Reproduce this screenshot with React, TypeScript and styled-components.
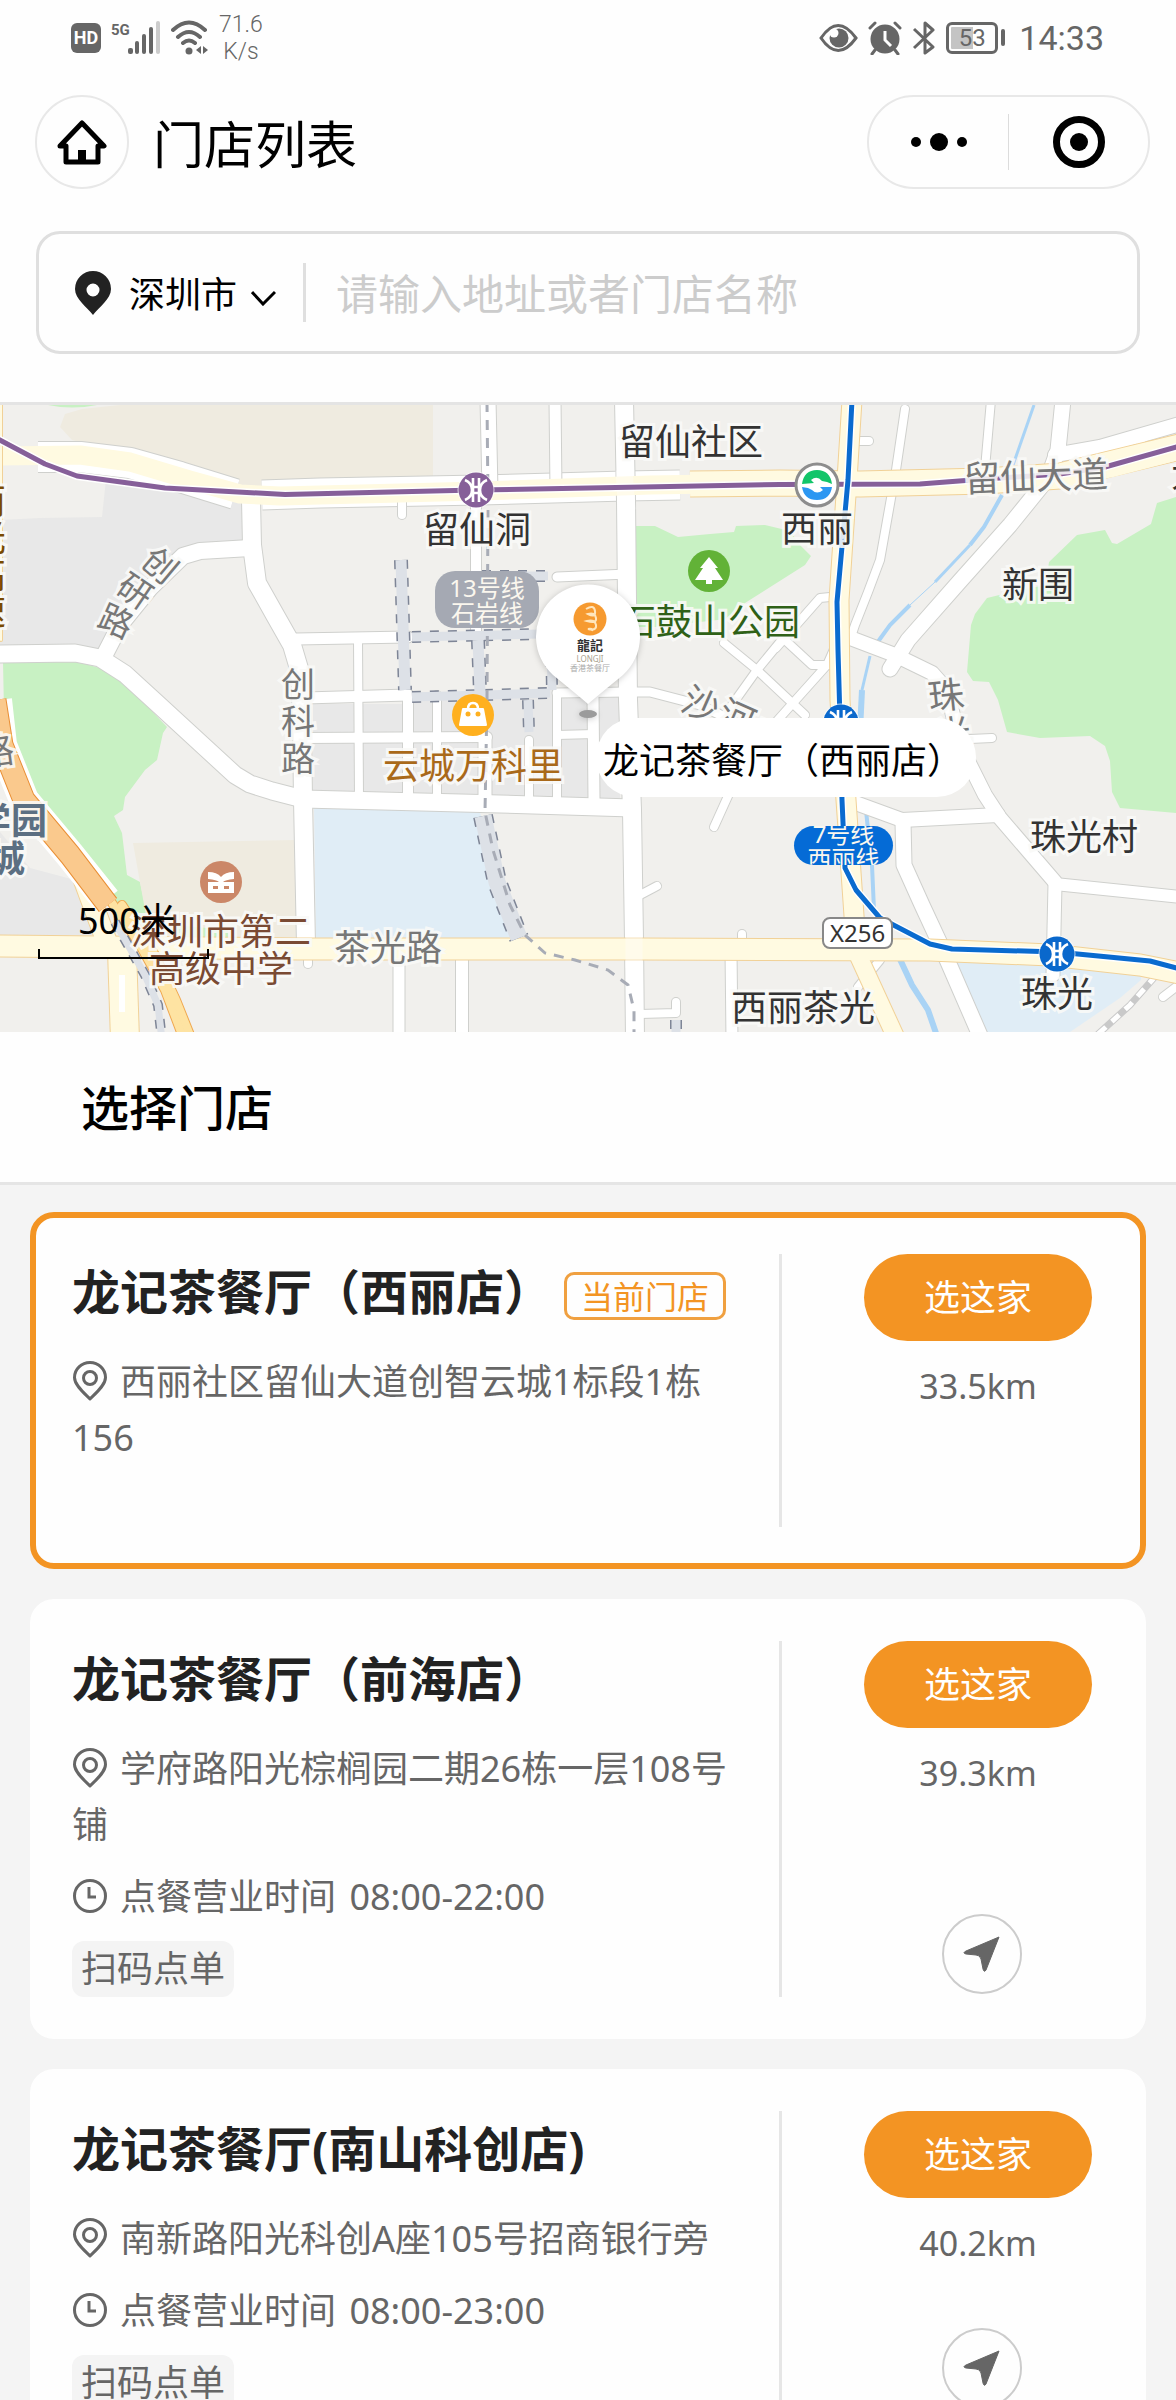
import React from "react";
import styled, { createGlobalStyle } from "styled-components";

const GlobalStyle = createGlobalStyle`
  *, *::before, *::after { box-sizing: border-box; }
  body {
    margin: 0;
    background: #f4f4f4;
    color: #000;
    font-family: "Noto Sans", "Noto Sans CJK SC", sans-serif;
  }
  h1, h2, h3, p, ul { margin: 0; padding: 0; }
  button, input, select { font: inherit; color: inherit; }
`;

const Page = styled.div`
  display: flex;
  flex-direction: column;
  height: 100vh;
  overflow: hidden;
`;

const Header = styled.header`
  flex: none;
  background: #fefefe;
  border-bottom: 3px solid #e4e4e4;
  padding-bottom: 48px;
`;

/* ---------- status bar ---------- */

const StatusBar = styled.div`
  display: flex;
  align-items: center;
  justify-content: space-between;
  height: 75px;
  padding: 0 72px 0 71px;
  color: #666;
`;

const StatusGroup = styled.div`
  display: flex;
  align-items: center;
  gap: 10px;
`;

const HdBadge = styled.span`
  width: 30px;
  height: 30px;
  border-radius: 6px;
  background: #666;
  color: #fff;
  font: 700 18px/30px Roboto, sans-serif;
  text-align: center;
`;

const NetSpeed = styled.span`
  font: 300 23px/27px Roboto, sans-serif;
  text-align: center;
`;

const Battery = styled.span`
  display: flex;
  align-items: center;
  gap: 3px;
  &::after {
    content: "";
    width: 4px;
    height: 17px;
    border-radius: 2px;
    background: #666;
  }
`;

const BatteryCell = styled.span`
  width: 52px;
  height: 32px;
  border: 3px solid #666;
  border-radius: 6px;
  background: linear-gradient(90deg, #c4c4c4 53%, #fefefe 53%) content-box;
  padding: 2px;
  font: 400 24px/23px Roboto, sans-serif;
  text-align: center;
`;

const Clock = styled.time`
  font: 400 34px/40px Roboto, sans-serif;
  margin-left: 4px;
`;

/* ---------- navigation ---------- */

const NavBar = styled.nav`
  display: flex;
  align-items: center;
  padding: 20px 26px 42px 35px;
`;

const HomeButton = styled.button`
  display: grid;
  place-items: center;
  width: 94px;
  height: 94px;
  padding: 0;
  border: 2px solid #e8e8e8;
  border-radius: 50%;
  background: none;
`;

const PageTitle = styled.h1`
  flex: 1;
  padding: 4px 0 0 24px;
  font-size: 51px;
  font-weight: 400;
  line-height: 72px;
`;

const Capsule = styled.div`
  display: flex;
  align-items: center;
  width: 283px;
  height: 94px;
  border: 2px solid #e8e8e8;
  border-radius: 47px;
`;

const CapsuleButton = styled.button`
  display: grid;
  place-items: center;
  flex: 1;
  height: 56px;
  padding: 0;
  border: 0;
  background: none;
  & + & { border-left: 1px solid #dcdcdc; }
`;

/* ---------- search ---------- */

const SearchBox = styled.form`
  display: flex;
  align-items: center;
  height: 123px;
  margin: 0 36px;
  padding: 0 36px;
  border: 3px solid #dfdfdf;
  border-radius: 24px;
`;

const CityField = styled.label`
  display: flex;
  align-items: center;
  gap: 18px;
  position: relative;
`;

const CitySelect = styled.select`
  appearance: none;
  width: 147px;
  padding: 4px 39px 0 0;
  border: 0;
  background: none;
  font-size: 36px;
  line-height: 54px;
`;

const CityArrow = styled.svg`
  position: absolute;
  right: 0;
  bottom: 16px;
  pointer-events: none;
`;

const SearchInput = styled.input`
  flex: 1;
  min-width: 0;
  height: 59px;
  margin-left: 27px;
  padding: 2px 0 0 30px;
  border: 0;
  border-left: 3px solid #dfdfdf;
  outline: 0;
  background: none;
  font-size: 42px;
  line-height: 57px;
  &::placeholder { color: #ccc; opacity: 1; }
`;

/* ---------- map ---------- */

const MapPanel = styled.section`
  display: flex;
  justify-content: center;
  flex: none;
  overflow: hidden;
  background: #f1f0ed;
`;

const MapCanvas = styled.div`
  position: relative;
  flex: none;
  width: 1176px;
  height: 627px;
  overflow: hidden;
`;

const MapArt = styled.svg`
  display: block;
`;

const MapLabel = styled.span<{ $x: number; $y: number; $color?: string; $rotate?: number; $size?: number; $bold?: boolean }>`
  position: absolute;
  left: ${(p) => p.$x}px;
  top: ${(p) => p.$y}px;
  transform: translate(-50%, -50%) rotate(${(p) => p.$rotate ?? 0}deg);
  color: ${(p) => p.$color ?? "#333"};
  font-size: ${(p) => p.$size ?? 36}px;
  font-weight: ${(p) => (p.$bold ? 700 : 400)};
  line-height: 37px;
  text-align: center;
  white-space: pre;
  -webkit-text-stroke: 6px rgba(250, 250, 248, 0.9);
  paint-order: stroke fill;
`;

const LineBadge = styled.span<{ $x: number; $y: number; $w: number; $h: number; $bg: string }>`
  position: absolute;
  left: ${(p) => p.$x}px;
  top: ${(p) => p.$y}px;
  display: flex;
  align-items: center;
  justify-content: center;
  width: ${(p) => p.$w}px;
  height: ${(p) => p.$h}px;
  border-radius: 20px;
  background: ${(p) => p.$bg};
  color: #fbf7ee;
  font-size: 24px;
  line-height: 25px;
  text-align: center;
  white-space: pre;
  overflow: hidden;
`;

const RoadSign = styled.span`
  position: absolute;
  left: 822px;
  top: 512px;
  width: 71px;
  height: 32px;
  border: 2px solid #888;
  border-radius: 8px;
  background: #fff;
  color: #333;
  font-size: 24px;
  line-height: 28px;
  text-align: center;
`;

const Callout = styled.span`
  position: absolute;
  left: 596px;
  top: 313px;
  width: 380px;
  height: 79px;
  padding-left: 7px;
  border-radius: 40px;
  background: #fff;
  font-size: 36px;
  line-height: 85px;
  white-space: nowrap;
`;

const ScaleBar = styled.span`
  position: absolute;
  left: 38px;
  top: 497px;
  width: 171px;
  height: 57px;
  padding-left: 40px;
  font-size: 36px;
  line-height: 38px;
  &::after {
    content: "";
    position: absolute;
    left: 0;
    right: 0;
    bottom: 0;
    height: 10px;
    border: solid #000;
    border-width: 0 2px 2px;
  }
`;

const PinBrand = styled.span`
  position: absolute;
  left: 536px;
  top: 232px;
  display: flex;
  flex-direction: column;
  align-items: center;
  width: 108px;
  color: #333;
  font-size: 13px;
  font-weight: 700;
  line-height: 17px;
`;

const PinNote = styled.span<{ $color: string }>`
  color: ${(p) => p.$color};
  font-size: 8px;
  font-weight: 400;
  line-height: 9px;
`;

type Road = [string, number];

const sideRoads: Road[] = [
  ["M251 500L252 545L257 583L275 615L292 645L300 672L302 720L303 800L306 945", 18],
  ["M250 548L200 551L183 556L150 588L120 625L104 656", 16],
  ["M-5 654L75 653L100 658L125 674L160 706L235 775L250 784L272 791L303 799L500 804L632 808", 17],
  ["M296 639L408 637", 11],
  ["M305 698L408 695", 11],
  ["M358 640L359 797", 8],
  ["M303 738L487 737", 10],
  ["M408 695L408 800", 10],
  ["M437 695L437 800", 8],
  ["M485 740L485 800", 13],
  ["M529 740L529 800", 8],
  ["M557 693L557 800", 8],
  ["M557 693L628 692", 9],
  ["M593 695L594 800", 11],
  ["M557 735L594 734", 8],
  ["M624 400L626 500L628 700L632 810L634 940L635 1040", 18],
  ["M488 400L490 490", 15],
  ["M476 500L476 636", 10],
  ["M555 400L556 490", 11],
  ["M557 577L628 574", 9],
  ["M402 500L402 515", 8],
  ["M905 409L896 470L888 515L880 560L868 592L855 625L850 640", 8],
  ["M991 400L984 480", 8],
  ["M852 441L869 441", 8],
  ["M1063 400L1058 450L1048 478L1010 525L960 581L908 640L890 669", 15],
  ["M1055 455L1100 447L1180 424", 14],
  ["M1141 443L1147 460", 9],
  ["M845 636L895 655L932 673L947 690L960 745L985 795L1000 818L1055 882", 14],
  ["M1055 884L1180 897", 12],
  ["M1055 884L1053 975", 13],
  ["M970 739L992 738", 8],
  ["M850 801L902 820L998 815", 14],
  ["M903 822L904 865L922 905L942 948L982 1040", 15],
  ["M724 643L757 670L805 715", 8],
  ["M785 636L757 670L727 712", 8],
  ["M776 648L820 598L840 596", 8],
  ["M785 640L812 665L838 665", 8],
  ["M838 640L827 665L776 722L760 740", 8],
  ["M630 692L650 692L700 705L735 722", 9],
  ["M733 785L714 827", 8],
  ["M640 895L657 886", 8],
  ["M640 1014L676 1013L676 1002", 8],
  ["M399 950L399 1040", 11],
  ["M462 950L462 1040", 12],
  ["M731 950L732 1040", 11],
  ["M742 945L742 934", 8],
  ["M308 955L308 964", 8],
  ["M880 960L858 987", 8],
  ["M1180 984L1163 997", 8],
];

const frontage: Road[] = [
  ["M38 457L80 457L130 463L180 477L235 494", 30],
  ["M262 495L320 493L480 490L625 486L680 485", 29],
];

const mainRoads: Road[] = [
  ["M-5 456L80 455L130 462L190 480L240 494L280 496L480 491L650 485L780 483L860 484L985 481L1060 478L1110 468L1180 450", 19],
  ["M690 484L780 483L860 484L985 481L1060 476L1180 447", 25],
  ["M852 400L847 480L839 600L840 700L846 800L855 930L860 950", 19],
  ["M-5 946L300 949L640 949L930 950L1050 955L1140 965L1180 973", 21],
  ["M80 870L108 945", 20],
  ["M122 950L125 1040", 28],
  ["M858 955L897 1040", 17],
];

const railBands: Road[] = [
  ["M401 560L405 690", 11],
  ["M412 637L540 634", 9],
  ["M478 640L480 692", 11],
  ["M412 697L550 693", 9],
  ["M482 576L548 576", 9],
  ["M551 640L552 690", 9],
  ["M528 700L529 732", 9],
  ["M483 816L497 882L519 938", 17],
  ["M676 1020L676 1040", 9],
  ["M115 922L145 975L158 1005L162 1040", 7],
];

const metroPurple = "M-4 438L45 464L77 476L165 488L285 494.500L476 490L780 484.500L920 484L985 479L1060 474L1105 467L1180 446";
const metroBlue = "M852 400L848 480L837 602L838 650L840 720L842 800L845 868L856 890L880 918L930 944L952 949L1057 952L1150 961L1180 969";

function Roads({ roads, fill, edge, cap = "round" }: { roads: Road[]; fill: string; edge: string; cap?: "round" | "butt" }) {
  return (
    <g fill="none" strokeLinejoin="round" strokeLinecap={cap}>
      {roads.map(([d, w], i) => <path key={`e${i}`} d={d} stroke={edge} strokeWidth={w + 2} />)}
      {roads.map(([d, w], i) => <path key={`f${i}`} d={d} stroke={fill} strokeWidth={w} />)}
    </g>
  );
}

function MetroSign({ x, y, color }: { x: number; y: number; color: string }) {
  return (
    <g transform={`translate(${x} ${y})`}>
      <circle r="18.500" fill="#fff" opacity="0.7" />
      <circle r="17.500" fill={color} />
      <path d="M-11-10Q-4-7-4 0Q-4 7-11 10M11-10Q4-7 4 0Q4 7 11 10M-3-12V12M3-12V12M-4-3H4M-4 3H4" fill="none" stroke="#fff" strokeWidth="2.600" />
    </g>
  );
}

function MapDrawing() {
  return (
    <MapArt width="1176" height="627" viewBox="0 405 1176 627" aria-hidden="true">
      <rect y="405" width="1176" height="627" fill="#f1f0ed" />
      <path d="M120 405L82 409L65 414L60 427L72 440L130 455L235 490H433V405Z" fill="#efebe0" />
      <path d="M48 405H97Q72 410 48 405Z" fill="#c8f1c3" />
      <path d="M107 470L102 517L40 518L0 520V650L104 650L170 560L245 548V500L200 488Z" fill="#e8e8e8" />
      <path d="M3 662L75 661L103 669L126 684L167 727L163 733L157 760L145 770L125 797L123 810L114 816L122 833L127 875L140 882L147 915L170 945L130 930L60 830L5 760Z" fill="#c8f1c3" />
      <path d="M0 832L30 868L75 880L98 935H0Z" fill="#e8e8e8" />
      <path d="M133 843L296 840V938H150Z" fill="#efebe0" />
      <path d="M175 925L228 930V940H175Z" fill="#c8f1c3" />
      <path d="M314 806L480 812L497 882L517 940H316Z" fill="#e0edf6" />
      <path d="M313 704H410V690H620V800H313Z" fill="#e8e8e8" />
      <path d="M413 642H478V692H413ZM486 642H546V692H486Z" fill="#f1f0ed" />
      <path d="M636 526H655L678 537L710 534L734 532L736 526L765 525L790 531L800 545L811 556L805 565L745 603L735 618L700 622L655 627H636Z" fill="#c8f1c3" />
      <path d="M1176 497L1157 503L1151 524L1117 544L1112 543L1105 530L1077 535L1049 562L1046 585L1020 590L987 598L975 614L971 625L967 672L973 681L989 682L998 700L1007 732L1040 738L1090 736L1105 746L1110 761L1112 792L1120 808L1176 813Z" fill="#c8f1c3" />
      <path d="M955 962L1141 970V980L1120 998L1070 1032H985Z" fill="#e0edf6" />
      <g fill="none" stroke="#a9d3f5">
        <path d="M1034 405L1013 465" strokeWidth="3" />
        <path d="M1002 495L984 527L970 545" strokeWidth="4" />
        <path d="M970 545L935 582" strokeWidth="3" />
        <path d="M935 582L910 605" strokeWidth="1" />
        <path d="M910 605L890 625L877 643" strokeWidth="4" />
        <path d="M870 656L862 690" strokeWidth="3" />
        <path d="M862 690L860 730" strokeWidth="6" />
        <path d="M866 810L868 830M872 865L874 910" strokeWidth="4" />
        <path d="M898 955L912 985L928 1010L937 1036" strokeWidth="6" />
      </g>
      <Roads roads={frontage} fill="#fff" edge="#cfd0cd" cap="butt" />
      <Roads roads={sideRoads} fill="#fff" edge="#cfd0cd" />
      <path d="M1168 962L1130 1005L1096 1036" fill="none" stroke="#c9c9c9" strokeWidth="7" />
      <path d="M1168 962L1130 1005L1096 1036" fill="none" stroke="#fff" strokeWidth="5" strokeDasharray="10 8" />
      <Roads roads={mainRoads.slice(1)} fill="#fffae1" edge="#f1d197" cap="butt" />
      <path d={mainRoads[0][0]} fill="none" stroke="#fffae1" strokeWidth={mainRoads[0][1]} strokeLinejoin="round" />
      <path d="M846 800L855 930L860 950M852 400L847 480L839 600L840 700M122 945V970M80 870L105 940" fill="none" stroke="#fffae1" strokeWidth="17" />
      <path d="M122 975V1012" stroke="#fff" strokeWidth="6" />
      <path d="M624 470L627 510M634 930V968" stroke="#fff" strokeWidth="17" opacity="0.35" />
      <Roads roads={[["M1 395L1 640", 2]]} fill="#fffae1" edge="#f1d197" />
      <Roads
        roads={[
          ["M110 900L140 945L165 990L184 1040", 8],
          ["M122 905L155 955L176 1000L192 1040", 8],
        ]}
        fill="#fee3a2"
        edge="#f0a850"
      />
      <path d="M-3 700L2 745L24 800L70 855L106 900" fill="none" stroke="#fff" strokeWidth="30" />
      <Roads roads={[["M-5 700L2 745L24 800L70 855L108 905", 21]]} fill="#fac98d" edge="#e98f35" cap="butt" />
      <g fill="none">
        {railBands.map(([d, w], i) => <path key={`d${i}`} d={d} stroke="#7e8596" strokeWidth={w + 3} strokeDasharray="9 9" />)}
        {railBands.map(([d, w], i) => <path key={`b${i}`} d={d} stroke="#dde1e7" strokeWidth={w} />)}
        <path d="M487 402L488 500L487 700L485 812L493 850L510 905L525 935L545 953L575 960L608 970L628 985L634 1010V1036" stroke="#a8acb6" strokeWidth="3" strokeDasharray="10 8" />
      </g>
      <g fill="none" strokeLinejoin="round">
        <path d={metroPurple} stroke="#fff" strokeWidth="8" />
        <path d={metroPurple} stroke="#865f99" strokeWidth="5" />
        <path d={metroBlue} stroke="#fff" strokeWidth="8" />
        <path d={metroBlue} stroke="#0a6bcf" strokeWidth="5" />
      </g>
      <MetroSign x={476} y={490} color="#865f99" />
      <MetroSign x={841} y={722} color="#0a68cc" />
      <MetroSign x={1057} y={954} color="#0a68cc" />
      <g transform="translate(817 485)">
        <circle r="21" fill="#fff" stroke="#8d8d8d" strokeWidth="3" />
        <path d="M-15-1Q-13-15 0-15T15-1L10-3L5-4Q0-10-6-5L-3-2Z" fill="#12c56a" />
        <path d="M15 2Q13 15 0 15T-15 2L-9 3L-5 5Q0 10 6 5L3 2Z" fill="#2c97f2" />
      </g>
      <g transform="translate(709 571)">
        <circle r="21" fill="#62b237" />
        <path d="M0-14L9-3H6L14 9H3V13H-3V9H-14L-6-3H-9Z" fill="#fff" />
      </g>
      <g transform="translate(473 715)">
        <circle r="21" fill="#ffb01f" />
        <path d="M-10-6H10L13 10H-13Z" fill="#fff" stroke="#fff" strokeWidth="2" strokeLinejoin="round" />
        <path d="M-5-6Q-5-12 0-12T5-6" fill="none" stroke="#fff" strokeWidth="2.500" />
        <circle cx="-5" cy="-1" r="2.500" fill="#ffb01f" />
        <circle cx="5" cy="-1" r="2.500" fill="#ffb01f" />
      </g>
      <g transform="translate(221 882)">
        <circle r="21" fill="#cb8768" />
        <path d="M-13-10Q-4-10 0-5Q4-10 13-10V-3Q4-2 2 0H13V11H-13V0H-2Q-4-2-13-3Z" fill="#fff" />
        <path d="M-8 4H-3V7H-8ZM3 4H8V7H3Z" fill="#cb8768" />
      </g>
    </MapArt>
  );
}

const PinArt = styled.svg`
  position: absolute;
  left: 526px;
  top: 172px;
  filter: drop-shadow(0 1px 3px rgba(0, 0, 0, 0.2));
`;

function StorePin() {
  return (
    <>
      <PinArt width="124" height="148" viewBox="526 577 124 148" aria-hidden="true">
        <ellipse cx="588" cy="714" rx="9" ry="4" fill="#9b9b9b" />
        <path d="M588 704Q580 697 553 675A52 52 0 1 1 623 675Q596 697 588 704Z" fill="#fff" />
        <circle cx="590" cy="619" r="16.500" fill="#f69a30" />
        <path d="M586 609Q594 604 595 611T588 614Q595 612 596 618T587 621Q595 619 596 625T588 629Q593 628 592 631" fill="none" stroke="#ffe6bd" strokeWidth="2" />
      </PinArt>
      <PinBrand>
        龍記
        <PinNote $color="#aaa28f">LONGJI</PinNote>
        <PinNote $color="#aaa">香港茶餐厅</PinNote>
      </PinBrand>
    </>
  );
}

function StoreMap() {
  const road = "#777";
  return (
    <MapPanel aria-label="门店地图">
      <MapCanvas>
        <MapDrawing />
        <MapLabel $x={691} $y={36}>留仙社区</MapLabel>
        <MapLabel $x={477} $y={124}>留仙洞</MapLabel>
        <MapLabel $x={817} $y={123}>西丽</MapLabel>
        <MapLabel $x={1036} $y={71} $color={road} $rotate={-2}>留仙大道</MapLabel>
        <MapLabel $x={1189} $y={68}>大</MapLabel>
        <MapLabel $x={1038} $y={179}>新围</MapLabel>
        <MapLabel $x={710} $y={216} $color="#2f6117">石鼓山公园</MapLabel>
        <MapLabel $x={160} $y={160} $color={road} $rotate={40} $size={34}>创</MapLabel>
        <MapLabel $x={135} $y={186} $color={road} $rotate={34} $size={34}>研</MapLabel>
        <MapLabel $x={116} $y={216} $color={road} $rotate={24} $size={34}>路</MapLabel>
        <MapLabel $x={298} $y={316} $color={road} $size={34}>{"创\n科\n路"}</MapLabel>
        <MapLabel $x={-12} $y={151} $color="#7a4a00">{"南\n光\n高\n速"}</MapLabel>
        <MapLabel $x={-4} $y={346} $color={road} $rotate={-8}>路</MapLabel>
        <MapLabel $x={11} $y={415} $color="#5c6f82" $bold>学园</MapLabel>
        <MapLabel $x={7} $y={453} $color="#5c6f82" $bold>城</MapLabel>
        <MapLabel $x={473} $y={360} $color="#a9691a">云城万科里</MapLabel>
        <MapLabel $x={221} $y={545} $color="#7a4a33">{"深圳市第二\n高级中学"}</MapLabel>
        <MapLabel $x={388} $y={542} $color={road}>茶光路</MapLabel>
        <MapLabel $x={803} $y={602}>西丽茶光</MapLabel>
        <MapLabel $x={1057} $y={588}>珠光</MapLabel>
        <MapLabel $x={1084} $y={431}>珠光村</MapLabel>
        <MapLabel $x={701} $y={299} $color={road} $rotate={24}>沙</MapLabel>
        <MapLabel $x={737} $y={312} $color={road} $rotate={24}>河</MapLabel>
        <MapLabel $x={771} $y={334} $color={road} $rotate={24}>西</MapLabel>
        <MapLabel $x={946} $y={290} $color={road} $rotate={-6}>珠</MapLabel>
        <MapLabel $x={953} $y={328} $color={road} $rotate={-8}>光</MapLabel>
        <LineBadge $x={435} $y={166} $w={104} $h={57} $bg="#a5a9b3">{"13号线\n石岩线"}</LineBadge>
        <LineBadge $x={794} $y={421} $w={99} $h={39} $bg="#056bd6">{"7号线\n西丽线"}</LineBadge>
        <RoadSign>X256</RoadSign>
        <StorePin />
        <Callout>龙记茶餐厅（西丽店）</Callout>
        <ScaleBar>500米</ScaleBar>
      </MapCanvas>
    </MapPanel>
  );
}

/* ---------- store list ---------- */

const SectionHead = styled.div`
  flex: none;
  padding: 40px 81px 38px;
  background: #fefefe;
  border-bottom: 3px solid #e5e5e5;
`;

const SectionTitle = styled.h2`
  font-size: 48px;
  font-weight: 500;
  line-height: 72px;
`;

const StoreList = styled.ul`
  display: flex;
  flex-direction: column;
  flex: 1;
  gap: 30px;
  min-height: 0;
  padding: 27px 30px;
  overflow-y: auto;
  scrollbar-width: none;
  list-style: none;
`;

const StoreCard = styled.li<{ $current?: boolean }>`
  display: flex;
  flex: none;
  padding: 36px;
  border: 6px solid ${(p) => (p.$current ? "#f39423" : "#fefefe")};
  border-radius: 24px;
  background: #fefefe;
`;

const StoreInfo = styled.div`
  flex: 1;
  min-width: 0;
  min-height: 273px;
  padding-right: 34px;
  color: #666;
  font-size: 36px;
  line-height: 56px;
`;

const StoreHead = styled.div`
  display: flex;
  align-items: center;
  gap: 12px;
  height: 76px;
  margin-bottom: 24px;
`;

const StoreName = styled.h3`
  color: #222;
  font-size: 48px;
  font-weight: 700;
  line-height: 76px;
  white-space: nowrap;
`;

const CurrentTag = styled.span`
  flex: none;
  height: 48px;
  margin-top: 8px;
  padding: 0 14px;
  border: 3px solid #f0a040;
  border-radius: 10px;
  color: #f39423;
  font-size: 32px;
  line-height: 44px;
`;

const InfoLine = styled.p`
  margin-bottom: 16px;
`;

const LineIcon = styled.svg`
  width: 36px;
  height: 40px;
  margin-right: 12px;
  vertical-align: -6px;
`;

const Hours = styled.span`
  margin-left: 4px;
`;

const ServiceTag = styled.span`
  display: inline-block;
  padding: 0 9px;
  border-radius: 12px;
  background: #f4f4f4;
  vertical-align: top;
`;

const StoreActions = styled.div`
  display: flex;
  flex-direction: column;
  align-items: center;
  flex: none;
  width: 325px;
  padding-left: 70px;
  border-left: 3px solid #e6e6e6;
`;

const PickButton = styled.button`
  width: 228px;
  height: 87px;
  padding: 0;
  border: 0;
  border-radius: 44px;
  background: #f39423;
  color: #fff;
  font-size: 36px;
  line-height: 54px;
`;

const Distance = styled.span`
  margin-top: 18px;
  color: #666;
  font-size: 34px;
  line-height: 54px;
`;

const RouteButton = styled.button`
  display: grid;
  place-items: center;
  width: 80px;
  height: 80px;
  margin: auto 0 3px 8px;
  padding: 0;
  border: 2px solid #ccc;
  border-radius: 50%;
  background: none;
`;

type Store = { name: string; address: string; distance: string; hours?: string; service?: string; current?: boolean };

const stores: Store[] = [
  { name: "龙记茶餐厅（西丽店）", address: "西丽社区留仙大道创智云城1标段1栋156", distance: "33.5km", current: true },
  { name: "龙记茶餐厅（前海店）", address: "学府路阳光棕榈园二期26栋一层108号铺", distance: "39.3km", hours: "08:00-22:00", service: "扫码点单" },
  { name: "龙记茶餐厅(南山科创店)", address: "南新路阳光科创A座105号招商银行旁", distance: "40.2km", hours: "08:00-23:00", service: "扫码点单" },
];

function StoreItem({ store }: { store: Store }) {
  return (
    <StoreCard $current={store.current}>
      <StoreInfo>
        <StoreHead>
          <StoreName>{store.name}</StoreName>
          {store.current && <CurrentTag>当前门店</CurrentTag>}
        </StoreHead>
        <InfoLine>
          <LineIcon viewBox="0 0 36 40" fill="none" stroke="#666" strokeWidth="3" aria-hidden="true">
            <path d="M18 38C12 32 2.500 24 2.500 16.500A15.500 15 0 0 1 33.500 16.500C33.500 24 24 32 18 38Z" strokeLinejoin="round" />
            <circle cx="18" cy="17" r="6.500" />
          </LineIcon>
          {store.address}
        </InfoLine>
        {store.hours && (
          <InfoLine>
            <LineIcon viewBox="0 0 36 40" fill="none" stroke="#666" strokeWidth="3" aria-hidden="true">
              <circle cx="18" cy="20" r="15.500" />
              <path d="M17 11V21H24" />
            </LineIcon>
            点餐营业时间 <Hours>{store.hours}</Hours>
          </InfoLine>
        )}
        {store.service && <ServiceTag>{store.service}</ServiceTag>}
      </StoreInfo>
      <StoreActions>
        <PickButton type="button">选这家</PickButton>
        <Distance>{store.distance}</Distance>
        {store.hours && (
          <RouteButton type="button" aria-label="导航">
            <svg width="38" height="38" viewBox="0 0 38 38" aria-hidden="true">
              <path d="M36 2L23 35Q21 38 20 34L18 24Q17 20 13 20L3 19Q-1 18 3 16Z" fill="#666" stroke="#666" strokeLinejoin="round" />
            </svg>
          </RouteButton>
        )}
      </StoreActions>
    </StoreCard>
  );
}

export default function App() {
  return (
    <Page>
      <GlobalStyle />
      <Header>
        <StatusBar>
          <StatusGroup>
            <HdBadge>HD</HdBadge>
            <svg width="50" height="34" viewBox="0 0 50 34" fill="#666" role="img" aria-label="5G">
              <text x="0" y="14" fontFamily="Roboto, sans-serif" fontWeight="700" fontSize="15">5G</text>
              <rect x="17" y="27" width="5" height="6" rx="2" />
              <rect x="24" y="20" width="4" height="13" rx="2" />
              <rect x="31" y="13" width="4" height="20" rx="2" />
              <rect x="38" y="6" width="4" height="27" rx="2" />
              <rect x="45" y="0" width="4" height="33" rx="2" fill="#ccc" />
            </svg>
            <svg width="38" height="36" viewBox="0 0 38 36" aria-hidden="true">
              <g fill="none" stroke="#666" strokeWidth="4" strokeLinecap="round">
                <path d="M2 10Q18-5 34 10M7 17Q18 7 29 17M12 23Q18 18 24 23" />
              </g>
              <circle cx="18" cy="31" r="3.500" fill="#666" />
              <path d="M25 30L30 26V34ZM32 26L37 30L32 34Z" fill="#666" />
            </svg>
            <NetSpeed>71.6<br />K/s</NetSpeed>
          </StatusGroup>
          <StatusGroup>
            <svg width="39" height="28" viewBox="0 0 39 28" aria-hidden="true">
              <path d="M2 14Q19-11 37 14Q19 39 2 14Z" fill="none" stroke="#666" strokeWidth="3" />
              <circle cx="20" cy="14" r="9.500" fill="#666" />
              <circle cx="15" cy="9" r="4.500" fill="#fefefe" />
            </svg>
            <svg width="34" height="34" viewBox="0 0 34 34" aria-hidden="true">
              <circle cx="17" cy="18" r="14.500" fill="#666" />
              <path d="M17 10V19L23 25" fill="none" stroke="#fefefe" strokeWidth="3" />
              <path d="M2 7L7 2M32 7L27 2M4 33L7 29M30 33L27 29" stroke="#666" strokeWidth="3" strokeLinecap="round" />
            </svg>
            <svg width="24" height="34" viewBox="0 0 24 34" fill="none" stroke="#666" strokeWidth="3" strokeLinejoin="round" aria-hidden="true">
              <path d="M2 8L21 26L13 32V2L21 9L2 27" />
            </svg>
            <Battery><BatteryCell>53</BatteryCell></Battery>
            <Clock>14:33</Clock>
          </StatusGroup>
        </StatusBar>
        <NavBar>
          <HomeButton type="button" aria-label="首页">
            <svg width="50" height="46" viewBox="0 0 50 46" aria-hidden="true">
              <path d="M3 27L25 4L47 27H41V43H9V27Z" fill="none" stroke="#000" strokeWidth="5" strokeLinejoin="round" />
              <path d="M21 31H29V43H21Z" />
            </svg>
          </HomeButton>
          <PageTitle>门店列表</PageTitle>
          <Capsule>
            <CapsuleButton type="button" aria-label="更多">
              <svg width="56" height="20" viewBox="0 0 56 20" aria-hidden="true">
                <circle cx="5" cy="10" r="5" />
                <circle cx="28" cy="10" r="9" />
                <circle cx="51" cy="10" r="5" />
              </svg>
            </CapsuleButton>
            <CapsuleButton type="button" aria-label="关闭">
              <svg width="52" height="52" viewBox="0 0 52 52" aria-hidden="true">
                <circle cx="26" cy="26" r="22.500" fill="none" stroke="#000" strokeWidth="7" />
                <circle cx="26" cy="26" r="9" />
              </svg>
            </CapsuleButton>
          </Capsule>
        </NavBar>
        <SearchBox>
          <CityField>
            <svg width="36" height="44" viewBox="0 0 36 44" aria-label="城市" role="img">
              <path d="M18 44C12 36 0 28 0 18A18 18 0 0 1 36 18C36 28 24 36 18 44ZM18 12.500A6.500 6.500 0 1 0 18 25.500A6.500 6.500 0 1 0 18 12.500Z" fill="#222" />
            </svg>
            <CitySelect defaultValue="深圳市">
              <option>深圳市</option>
            </CitySelect>
            <CityArrow width="25" height="16" viewBox="0 0 25 16" fill="none" stroke="#000" strokeWidth="3" aria-hidden="true">
              <path d="M1 2L12 14L24 2" />
            </CityArrow>
          </CityField>
          <SearchInput type="search" aria-label="搜索门店" placeholder="请输入地址或者门店名称" />
        </SearchBox>
      </Header>
      <StoreMap />
      <SectionHead>
        <SectionTitle>选择门店</SectionTitle>
      </SectionHead>
      <StoreList>
        {stores.map((s) => <StoreItem key={s.name} store={s} />)}
      </StoreList>
    </Page>
  );
}
